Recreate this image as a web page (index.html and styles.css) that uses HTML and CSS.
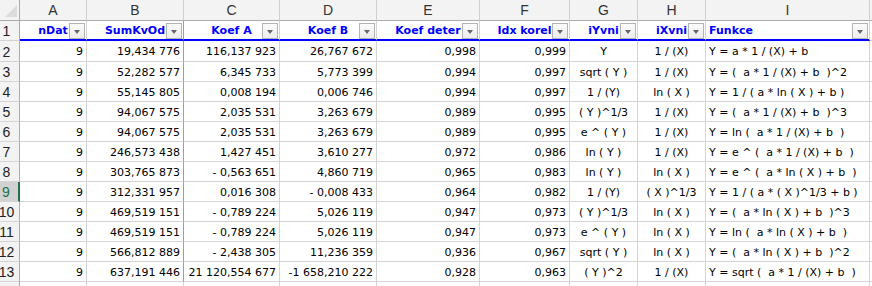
FILE: index.html
```html
<!DOCTYPE html>
<html>
<head>
<meta charset="utf-8">
<link rel="stylesheet" href="styles.css">
</head>
<body>
<div class="sheet">
  <div class="hd corner"><svg class="tri" width="20" height="20" viewBox="0 0 20 20"><polygon points="17,5 17,17 5,17" fill="#dcdcdc"/></svg></div>
  <div class="hd">A</div><div class="hd">B</div><div class="hd">C</div><div class="hd">D</div><div class="hd">E</div><div class="hd">F</div><div class="hd">G</div><div class="hd">H</div><div class="hd">I</div><div class="hd"></div>

  <div class="rh">1</div>
  <div class="c th m">nDat<span class="fb"></span></div>
  <div class="c th m bb">SumKvOd<span class="fb"></span></div>
  <div class="c th m">Koef A<span class="fb"></span></div>
  <div class="c th m">Koef B<span class="fb"></span></div>
  <div class="c th m">Koef deter<span class="fb"></span></div>
  <div class="c th m">Idx korel<span class="fb"></span></div>
  <div class="c th m">iYvni<span class="fb"></span></div>
  <div class="c th m">iXvni<span class="fb"></span></div>
  <div class="c th l">Funkce<span class="fb"></span></div>
  <div class="c"></div>

  <div class="rh">2</div><div class="c r">9</div><div class="c r bb">19,434 776</div><div class="c r">116,137 923</div><div class="c r">26,767 672</div><div class="c r">0,998</div><div class="c r">0,999</div><div class="c m">Y</div><div class="c m">1 / (X)</div><div class="c l">Y = a * 1 / (X) + b</div><div class="c"></div>

  <div class="rh">3</div><div class="c r">9</div><div class="c r bb">52,282 577</div><div class="c r">6,345 733</div><div class="c r">5,773 399</div><div class="c r">0,994</div><div class="c r">0,997</div><div class="c m">sqrt ( Y )</div><div class="c m">1 / (X)</div><div class="c l">Y = (  a * 1 / (X) + b  )^2</div><div class="c"></div>

  <div class="rh">4</div><div class="c r">9</div><div class="c r bb">55,145 805</div><div class="c r">0,008 194</div><div class="c r">0,006 746</div><div class="c r">0,994</div><div class="c r">0,997</div><div class="c m">1 / (Y)</div><div class="c m">ln ( X )</div><div class="c l">Y = 1 / ( a * ln ( X ) + b )</div><div class="c"></div>

  <div class="rh">5</div><div class="c r">9</div><div class="c r bb">94,067 575</div><div class="c r">2,035 531</div><div class="c r">3,263 679</div><div class="c r">0,989</div><div class="c r">0,995</div><div class="c m">( Y )^1/3</div><div class="c m">1 / (X)</div><div class="c l">Y = (  a * 1 / (X) + b  )^3</div><div class="c"></div>

  <div class="rh">6</div><div class="c r">9</div><div class="c r bb">94,067 575</div><div class="c r">2,035 531</div><div class="c r">3,263 679</div><div class="c r">0,989</div><div class="c r">0,995</div><div class="c m">e ^ ( Y )</div><div class="c m">1 / (X)</div><div class="c l">Y = ln (  a * 1 / (X) + b  )</div><div class="c"></div>

  <div class="rh">7</div><div class="c r">9</div><div class="c r bb">246,573 438</div><div class="c r">1,427 451</div><div class="c r">3,610 277</div><div class="c r">0,972</div><div class="c r">0,986</div><div class="c m">ln ( Y )</div><div class="c m">1 / (X)</div><div class="c l">Y = e ^ (  a * 1 / (X) + b  )</div><div class="c"></div>

  <div class="rh">8</div><div class="c r">9</div><div class="c r bb">303,765 873</div><div class="c r">- 0,563 651</div><div class="c r">4,860 719</div><div class="c r">0,965</div><div class="c r">0,983</div><div class="c m">ln ( Y )</div><div class="c m">ln ( X )</div><div class="c l">Y = e ^ (  a * ln ( X ) + b  )</div><div class="c"></div>

  <div class="rh sel">9</div><div class="c r">9</div><div class="c r bb">312,331 957</div><div class="c r">0,016 308</div><div class="c r">- 0,008 433</div><div class="c r">0,964</div><div class="c r">0,982</div><div class="c m">1 / (Y)</div><div class="c m">( X )^1/3</div><div class="c l">Y = 1 / ( a * ( X )^1/3 + b )</div><div class="c"></div>

  <div class="rh">10</div><div class="c r">9</div><div class="c r bb">469,519 151</div><div class="c r">- 0,789 224</div><div class="c r">5,026 119</div><div class="c r">0,947</div><div class="c r">0,973</div><div class="c m">( Y )^1/3</div><div class="c m">ln ( X )</div><div class="c l">Y = (  a * ln ( X ) + b  )^3</div><div class="c"></div>

  <div class="rh">11</div><div class="c r">9</div><div class="c r bb">469,519 151</div><div class="c r">- 0,789 224</div><div class="c r">5,026 119</div><div class="c r">0,947</div><div class="c r">0,973</div><div class="c m">e ^ ( Y )</div><div class="c m">ln ( X )</div><div class="c l">Y = ln (  a * ln ( X ) + b  )</div><div class="c"></div>

  <div class="rh">12</div><div class="c r">9</div><div class="c r bb">566,812 889</div><div class="c r">- 2,438 305</div><div class="c r">11,236 359</div><div class="c r">0,936</div><div class="c r">0,967</div><div class="c m">sqrt ( Y )</div><div class="c m">ln ( X )</div><div class="c l">Y = (  a * ln ( X ) + b  )^2</div><div class="c"></div>

  <div class="rh">13</div><div class="c r">9</div><div class="c r bb">637,191 446</div><div class="c r">21 120,554 677</div><div class="c r">-1 658,210 222</div><div class="c r">0,928</div><div class="c r">0,963</div><div class="c m">( Y )^2</div><div class="c m">1 / (X)</div><div class="c l">Y = sqrt (  a * 1 / (X) + b  )</div><div class="c"></div>

  <div class="rh"></div><div class="c"></div><div class="c"></div><div class="c"></div><div class="c"></div><div class="c"></div><div class="c"></div><div class="c"></div><div class="c"></div><div class="c"></div><div class="c"></div>
</div>
</body>
</html>
```
FILE: styles.css
```css
html, body {
  margin: 0;
  padding: 0;
  background: #ffffff;
  overflow: hidden;
}

body {
  font-family: "DejaVu Sans", sans-serif;
  font-size: 11px;
  color: #000;
}

.sheet {
  display: grid;
  grid-template-columns: 20px 67px 97px 96px 97px 103px 90px 68px 68px 164px 20px;
  grid-template-rows: 21px 20px 21px repeat(11, 20px) 20px;
  width: 890px;
}

.hd {
  box-sizing: border-box;
  background: #f3f3f3;
  border-right: 1px solid #d0d0d0;
  border-bottom: 1px solid #ababab;
  display: flex;
  align-items: center;
  justify-content: center;
  font-family: "Liberation Sans", Arial, sans-serif;
  font-size: 14px;
  color: #333;
}

.corner {
  border-right: 1px solid #ababab;
  position: relative;
  display: block;
}

.tri {
  display: block;
}

.rh {
  box-sizing: border-box;
  background: #f3f3f3;
  border-right: 1px solid #ababab;
  border-bottom: 1px solid #d4d4d4;
  display: flex;
  align-items: center;
  justify-content: center;
  padding-right: 6px;
  padding-top: 1px;
  font-family: "Liberation Sans", Arial, sans-serif;
  font-size: 14px;
  color: #222;
  white-space: nowrap;
}

.rh.sel {
  background: #d2d2d2;
  color: #217346;
  border-right: 2px solid #217346;
}

.c {
  box-sizing: border-box;
  border-right: 1px solid #d4d4d4;
  border-bottom: 1px solid #d4d4d4;
  display: flex;
  align-items: center;
  padding: 1px 3px 0 3px;
  white-space: pre;
  overflow: hidden;
}

.c.bb {
  border-right-color: #9e9e9e;
}

.r { justify-content: flex-end; }
.m { justify-content: center; }
.l { justify-content: flex-start; }

.th {
  position: relative;
  font-weight: bold;
  color: #0000ff;
  border-bottom: 2px solid #0000ff;
  padding-top: 0;
  overflow: visible;
}

.fb {
  position: absolute;
  right: 1px;
  top: 2px;
  width: 16px;
  height: 16px;
  box-sizing: border-box;
  border: 1px solid #b4b4b4;
  background: linear-gradient(#fbfbfb, #ececec);
}

.fb::after {
  content: "";
  position: absolute;
  left: 4px;
  top: 6px;
  border-left: 3.5px solid transparent;
  border-right: 3.5px solid transparent;
  border-top: 4px solid #666;
}
```
